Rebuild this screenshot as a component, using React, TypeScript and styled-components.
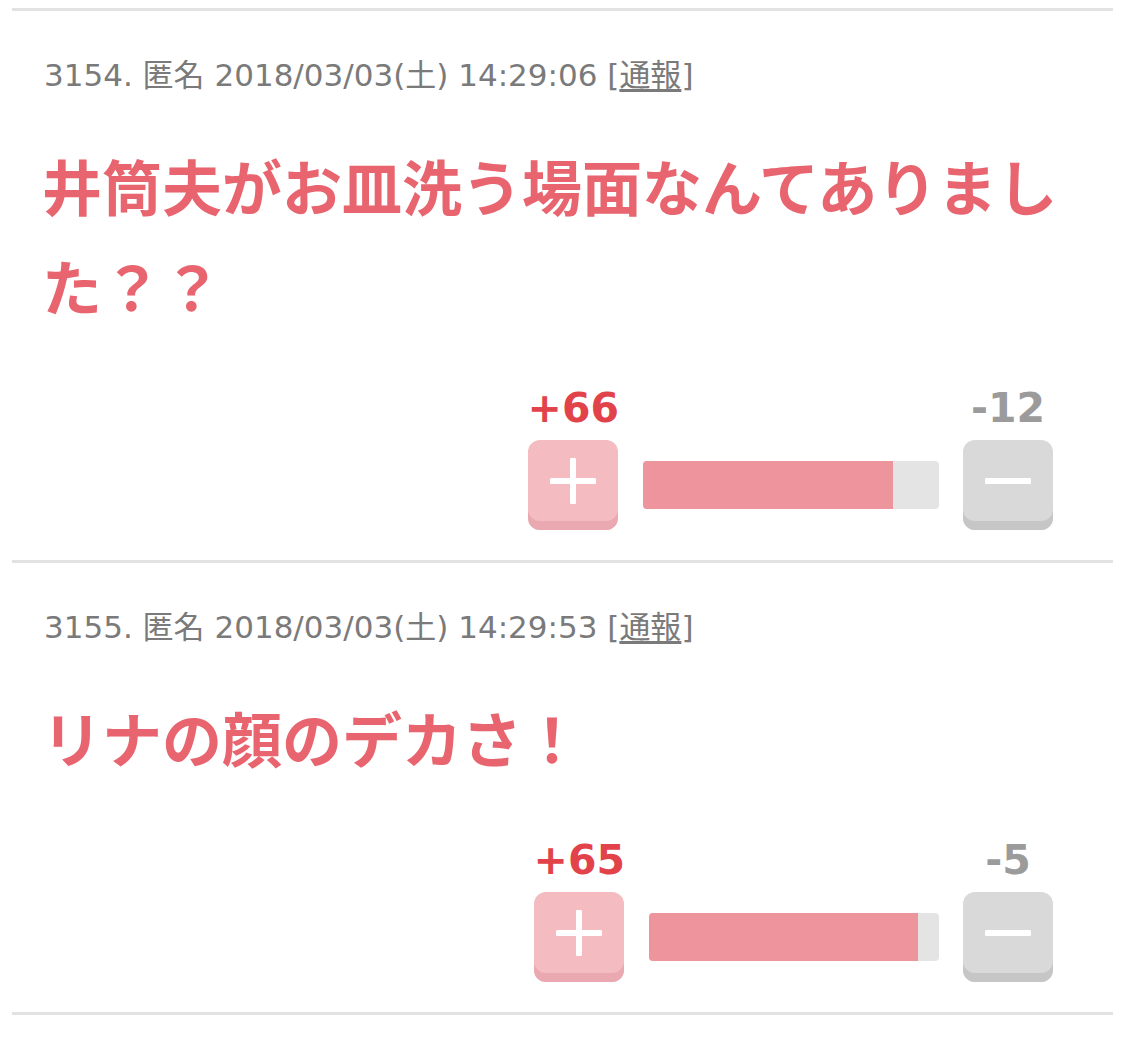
import React from "react";
import styled, { createGlobalStyle } from "styled-components";

const GlobalStyle = createGlobalStyle`
  html, body { margin: 0; padding: 0; background: #ffffff; }
  body { font-family: "Noto Sans CJK JP", "Noto Sans", sans-serif; }
`;

const List = styled.div`
  padding: 8px 12px 0 12px;
  display: flex;
  flex-direction: column;
`;

const Item = styled.article`
  border-top: 3px solid #e2e2e2;
  padding: 46px 60px 30px 32px;
  display: flex;
  flex-direction: column;
  &:last-child {
    border-bottom: 3px solid #e2e2e2;
  }
`;

const Meta = styled.div`
  font-family: "DejaVu Sans", "Noto Sans CJK JP", sans-serif;
  font-size: 31px;
  line-height: 36px;
  color: #7a7a7a;
  white-space: nowrap;
`;

const Report = styled.a`
  color: #7a7a7a;
  text-decoration: underline;
  text-underline-offset: 3px;
`;

const Body = styled.div`
  margin: 42px -40px 0 -2px;
  font-family: "Noto Sans CJK JP", sans-serif;
  font-weight: 700;
  font-size: 60px;
  line-height: 100px;
  color: #e8646e;
`;

const Vote = styled.div`
  margin-top: 51px;
  align-self: flex-end;
  display: grid;
  grid-template-columns: auto auto auto;
  grid-template-rows: 44px 90px;
  column-gap: 24px;
  row-gap: 10px;
  align-items: center;
`;

const Count = styled.div<{ $up?: boolean }>`
  font-family: "DejaVu Sans", sans-serif;
  font-weight: 700;
  font-size: 41px;
  line-height: 44px;
  text-align: center;
  color: ${(p) => (p.$up ? "#e2434b" : "#9b9b9b")};
`;

const Button = styled.button<{ $up?: boolean }>`
  justify-self: center;
  width: 90px;
  height: 90px;
  border: none;
  padding: 0 0 8px 0;
  border-radius: 12px;
  background: ${(p) => (p.$up ? "#f4bcc1" : "#d9d9d9")};
  box-shadow: inset 0 -9px 0 ${(p) => (p.$up ? "#eaa9b0" : "#c6c6c6")};
  display: flex;
  align-items: center;
  justify-content: center;
`;

const Bar = styled.div<{ $w: number }>`
  width: ${(p) => p.$w}px;
  height: 48px;
  border-radius: 4px;
  background: #e4e4e4;
  overflow: hidden;
  display: flex;
`;

const Fill = styled.div`
  height: 100%;
  background: #ee949c;
`;

const Sign: React.FC<{ plus?: boolean }> = ({ plus }) => (
  <svg width="46" height="46" viewBox="0 0 46 46">
    <line x1="2" y1="23" x2="44" y2="23" stroke="#ffffff" strokeWidth="6" strokeLinecap="round" />
    {plus && <line x1="23" y1="2" x2="23" y2="44" stroke="#ffffff" strokeWidth="6" strokeLinecap="round" />}
  </svg>
);

type Post = {
  no: number;
  time: string;
  text: string;
  plus: number;
  minus: number;
  barWidth: number;
};

const posts: Post[] = [
  {
    no: 3154,
    time: "2018/03/03(土) 14:29:06",
    text: "井筒夫がお皿洗う場面なんてありました？？",
    plus: 66,
    minus: 12,
    barWidth: 296,
  },
  {
    no: 3155,
    time: "2018/03/03(土) 14:29:53",
    text: "リナの顔のデカさ！",
    plus: 65,
    minus: 5,
    barWidth: 290,
  },
];

export default function App() {
  return (
    <>
      <GlobalStyle />
      <List>
        {posts.map((p) => {
          const ratio = p.plus / (p.plus + p.minus);
          return (
            <Item key={p.no}>
              <Meta>
                {p.no}. 匿名 {p.time} [<Report>通報</Report>]
              </Meta>
              <Body>{p.text}</Body>
              <Vote>
                <Count $up>+{p.plus}</Count>
                <div />
                <Count>-{p.minus}</Count>
                <Button $up aria-label="plus">
                  <Sign plus />
                </Button>
                <Bar $w={p.barWidth}>
                  <Fill style={{ width: `${(ratio * 100).toFixed(1)}%` }} />
                </Bar>
                <Button aria-label="minus">
                  <Sign />
                </Button>
              </Vote>
            </Item>
          );
        })}
      </List>
    </>
  );
}
